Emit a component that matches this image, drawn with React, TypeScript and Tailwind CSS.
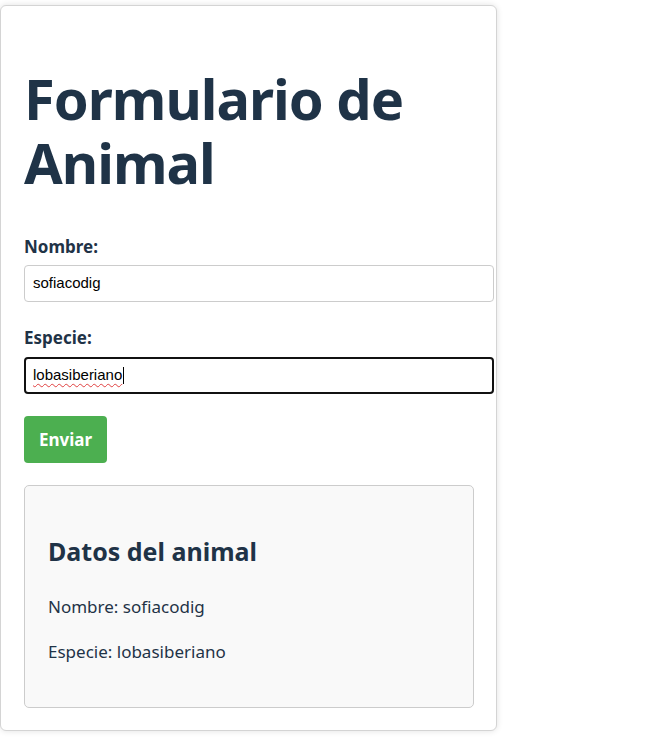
import React from "react";

export default function App() {
  const font = { fontFamily: '"Noto Sans", "Open Sans", sans-serif' };
  return (
    <div className="min-h-[738px] bg-white pt-[5px]" style={font}>
      <div className="w-[497px] rounded-[6px] border border-[#d4d4d4] bg-white px-[23px] pt-[60px] pb-[22px] shadow-[0_0_6px_rgba(0,0,0,0.12)]">
        <h1 className="text-[56px] font-bold leading-[64px] tracking-[-1px] text-[#1f3347]">
          Formulario de Animal
        </h1>
        <div className="mt-[41px] text-[17px] font-bold leading-[24px] text-[#1f3347]">Nombre:</div>
        <div
          className="mt-[6px] flex h-[37px] w-[470px] items-center rounded-[4px] border border-[#cccccc] bg-white px-[8px] text-[15px] text-black"
          style={{ fontFamily: '"Liberation Sans", Arial, sans-serif' }}
        >
          sofiacodig
        </div>
        <div className="mt-[24px] text-[17px] font-bold leading-[24px] text-[#1f3347]">Especie:</div>
        <div
          className="mt-[7px] flex h-[37px] w-[470px] items-center rounded-[4px] border-2 border-[#111111] bg-white px-[7px] text-[15px] text-black"
          style={{ fontFamily: '"Liberation Sans", Arial, sans-serif' }}
        >
          <span className="underline decoration-wavy decoration-[#e04040] decoration-1 underline-offset-[3px]">lobasiberiano</span>
          <span className="ml-[1px] inline-block h-[17px] w-[1px] bg-black" />
        </div>
        <button className="mt-[22px] flex h-[47px] w-[83px] items-center justify-center rounded-[4px] bg-[#4caf50] text-[17px] font-bold text-white">
          Enviar
        </button>
        <div className="mt-[22px] w-[450px] rounded-[5px] border border-[#cccccc] bg-[#f9f9f9] px-[23px] pt-[47px] pb-[43px] text-[#1f3347]">
          <h2 className="text-[25px] font-bold leading-[36px]">Datos del animal</h2>
          <p className="mt-[26px] text-[17px] leading-[24px]">Nombre: sofiacodig</p>
          <p className="mt-[21px] text-[17px] leading-[24px]">Especie: lobasiberiano</p>
        </div>
      </div>
    </div>
  );
}
